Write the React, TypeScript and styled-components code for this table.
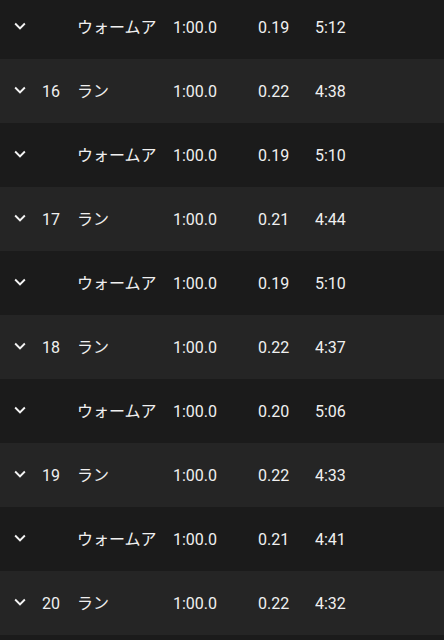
import React from "react";
import styled, { createGlobalStyle } from "styled-components";

const GlobalStyle = createGlobalStyle`
  html, body {
    margin: 0;
    padding: 0;
    background: #1b1b1b;
    overflow: hidden;
  }
  body {
    font-family: Roboto, "Noto Sans CJK JP", sans-serif;
    -webkit-font-smoothing: antialiased;
  }
`;

const Screen = styled.div`
  width: 444px;
  height: 640px;
  overflow: hidden;
  background: #1b1b1b;
`;

const List = styled.div`
  display: flex;
  flex-direction: column;
  margin-top: -5px;
`;

const Row = styled.div<{ $alt: boolean }>`
  box-sizing: border-box;
  display: grid;
  grid-template-columns: 33px 35px 96px 85px 57px 1fr;
  align-items: center;
  height: 64px;
  padding-left: 9px;
  background: ${(p) => (p.$alt ? "#252525" : "#1b1b1b")};
  color: #f0f0f0;
  font-size: 16px;
  line-height: 20px;
`;

const Cell = styled.div`
  white-space: nowrap;
  overflow: hidden;
  padding-top: 2px;
`;

const IconCell = styled.div`
  display: flex;
  align-items: center;
  margin-top: -2px;
`;

const Chevron = () => (
  <svg width="22" height="22" viewBox="0 0 24 24" fill="#f4f4f4" aria-hidden>
    <path d="M16.59 8.59L12 13.17 7.41 8.59 6 10l6 6 6-6z" />
  </svg>
);

type Lap = { num?: number; name: string; time: string; dist: string; pace: string };

const laps: Lap[] = [
  { name: "ウォームア", time: "1:00.0", dist: "0.19", pace: "5:12" },
  { num: 16, name: "ラン", time: "1:00.0", dist: "0.22", pace: "4:38" },
  { name: "ウォームア", time: "1:00.0", dist: "0.19", pace: "5:10" },
  { num: 17, name: "ラン", time: "1:00.0", dist: "0.21", pace: "4:44" },
  { name: "ウォームア", time: "1:00.0", dist: "0.19", pace: "5:10" },
  { num: 18, name: "ラン", time: "1:00.0", dist: "0.22", pace: "4:37" },
  { name: "ウォームア", time: "1:00.0", dist: "0.20", pace: "5:06" },
  { num: 19, name: "ラン", time: "1:00.0", dist: "0.22", pace: "4:33" },
  { name: "ウォームア", time: "1:00.0", dist: "0.21", pace: "4:41" },
  { num: 20, name: "ラン", time: "1:00.0", dist: "0.22", pace: "4:32" },
];

export default function App() {
  return (
    <>
      <GlobalStyle />
      <Screen>
        <List>
          {laps.map((l, i) => (
            <Row key={i} $alt={i % 2 === 1}>
              <IconCell>
                <Chevron />
              </IconCell>
              <Cell>{l.num ?? ""}</Cell>
              <Cell>{l.name}</Cell>
              <Cell>{l.time}</Cell>
              <Cell>{l.dist}</Cell>
              <Cell>{l.pace}</Cell>
            </Row>
          ))}
        </List>
      </Screen>
    </>
  );
}
